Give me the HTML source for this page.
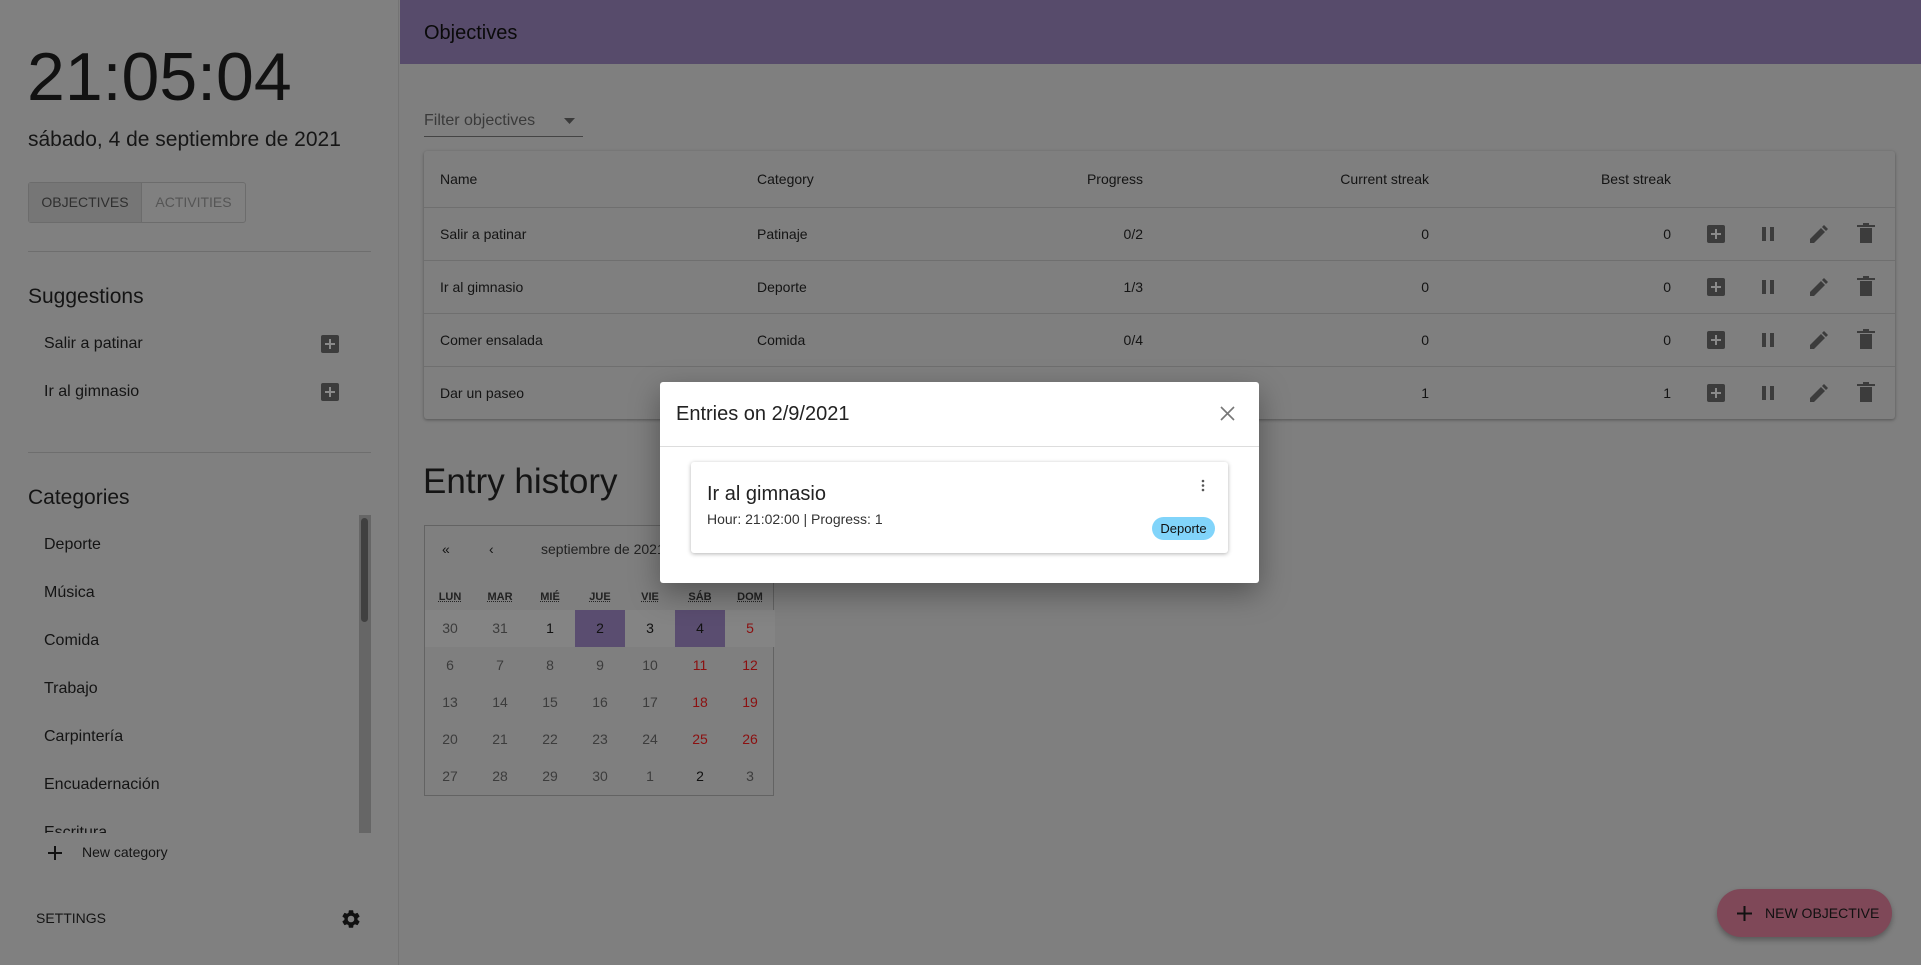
<!DOCTYPE html>
<html><head><meta charset="utf-8"><style>
*{margin:0;padding:0;box-sizing:border-box}
body{width:1921px;height:965px;background:#7f7f7f;font-family:"Liberation Sans",sans-serif;color:#141414;position:relative;overflow:hidden}
.a{position:absolute;white-space:nowrap}
.side{position:absolute;left:0;top:0;width:399px;height:965px;background:#808080;border-right:1px solid #747474}
.hdr{position:absolute;left:400px;top:0;width:1521px;height:64px;background:#574b6b}
.tbl{position:absolute;left:424px;top:151px;width:1471px;height:268px;background:#7f7f7f;box-shadow:0 1px 3px rgba(0,0,0,.35);border-radius:3px}
.row{position:absolute;left:0;width:1471px;height:53px;border-top:1px solid #6f6f6f;font-size:14px}
.row .a{top:18px}
.cal{position:absolute;left:424px;top:525px;width:350px;height:271px;border:1px solid #636363}
.cell{position:absolute;width:50px;height:37px;text-align:center;line-height:37px;font-size:14px;color:#3c3c3c}
.dlg{position:absolute;left:660px;top:382px;width:599px;height:201px;background:#fff;border-radius:3px;box-shadow:0 10px 30px rgba(0,0,0,.35)}
</style></head><body>
<div class="side">
  <div class="a" style="left:27px;top:38px;font-size:68px;color:#111">21:05:04</div>
  <div class="a" style="left:28px;top:128px;font-size:21px;color:#161616">sábado, 4 de septiembre de 2021</div>
  <div class="a" style="left:28px;top:182px;width:218px;height:41px;border:1px solid #6c6c6c;border-radius:3px"></div>
  <div class="a" style="left:29px;top:183px;width:113px;height:39px;background:#767676;border-right:1px solid #6c6c6c;font-size:14px;color:#2f2f2f;text-align:center;line-height:39px">OBJECTIVES</div>
  <div class="a" style="left:142px;top:183px;width:103px;height:39px;font-size:14px;color:#555;text-align:center;line-height:39px">ACTIVITIES</div>
  <div class="a" style="left:28px;top:251px;width:343px;height:1px;background:#6e6e6e"></div>
  <div class="a" style="left:28px;top:285px;font-size:21px">Suggestions</div>
  <div class="a" style="left:44px;top:335px;font-size:16px">Salir a patinar</div>
  <div class="a" style="left:44px;top:383px;font-size:16px">Ir al gimnasio</div>
  <svg class="a" style="left:321px;top:335px" width="19" height="19"><rect width="18" height="18" rx="2" fill="#3c3c3c"/><path d="M9 4v10M4 9h10" stroke="#8a8a8a" stroke-width="2"/></svg>
  <svg class="a" style="left:321px;top:383px" width="19" height="19"><rect width="18" height="18" rx="2" fill="#3c3c3c"/><path d="M9 4v10M4 9h10" stroke="#8a8a8a" stroke-width="2"/></svg>
  <div class="a" style="left:28px;top:452px;width:343px;height:1px;background:#6e6e6e"></div>
  <div class="a" style="left:28px;top:486px;font-size:21px">Categories</div>
  <div class="a" style="left:0;top:515px;width:372px;height:318px;overflow:hidden">
    <div class="a" style="left:44px;top:21px;font-size:16px">Deporte</div>
    <div class="a" style="left:44px;top:69px;font-size:16px">Música</div>
    <div class="a" style="left:44px;top:117px;font-size:16px">Comida</div>
    <div class="a" style="left:44px;top:165px;font-size:16px">Trabajo</div>
    <div class="a" style="left:44px;top:213px;font-size:16px">Carpintería</div>
    <div class="a" style="left:44px;top:261px;font-size:16px">Encuadernación</div>
    <div class="a" style="left:44px;top:309px;font-size:16px">Escritura</div>
    <div class="a" style="left:359px;top:0;width:12px;height:318px;background:#666"></div>
    <div class="a" style="left:361px;top:3px;width:7px;height:104px;border-radius:4px;background:#404040"></div>
  </div>
  <svg class="a" style="left:47px;top:845px" width="16" height="16"><path d="M8 1v14M1 8h14" stroke="#111" stroke-width="2"/></svg>
  <div class="a" style="left:82px;top:844px;font-size:14px">New category</div>
  <div class="a" style="left:36px;top:910px;font-size:14px">SETTINGS</div>
  <svg class="a" style="left:340px;top:908px" width="22" height="22" viewBox="0 0 24 24"><path fill="#111" d="M19.14 12.94c.04-.3.06-.61.06-.94 0-.32-.02-.64-.07-.94l2.030-1.58a.49.49 0 0 0 .12-.61l-1.92-3.32a.49.49 0 0 0-.59-.22l-2.39.96c-.5-.38-1.03-.7-1.62-.94l-.36-2.54a.48.48 0 0 0-.48-.41h-3.84c-.24 0-.43.17-.47.41l-.36 2.54c-.59.24-1.130.57-1.62.94l-2.39-.96a.48.48 0 0 0-.59.22L2.74 8.87c-.12.21-.08.47.12.61l2.03 1.58c-.05.3-.09.63-.09.94s.02.64.07.94l-2.03 1.58a.49.49 0 0 0-.12.61l1.92 3.32c.12.22.37.29.59.22l2.39-.96c.5.38 1.03.7 1.62.94l.36 2.54c.05.24.24.41.48.41h3.84c.24 0 .44-.17.47-.41l.36-2.54c.59-.24 1.13-.56 1.62-.94l2.39.96c.22.08.47 0 .59-.22l1.92-3.32c.12-.22.07-.47-.12-.61l-2.01-1.58zM12 15.6A3.6 3.6 0 1 1 12 8.4a3.6 3.6 0 0 1 0 7.2z"/></svg>
</div>

<div class="hdr"><div class="a" style="left:24px;top:22px;font-size:20px;color:#0a0a0a">Objectives</div></div>

<div class="a" style="left:424px;top:112px;font-size:16px;color:#3a3a3a">Filter objectives</div>
<svg class="a" style="left:564px;top:118px" width="12" height="7"><path d="M0 0h11L5.5 6z" fill="#3a3a3a"/></svg>
<div class="a" style="left:424px;top:136px;width:159px;height:1px;background:#444"></div>

<div class="tbl">
  <div class="a" style="left:16px;top:20px;font-size:14px">Name</div>
  <div class="a" style="left:333px;top:20px;font-size:14px">Category</div>
  <div class="a" style="right:752px;top:20px;font-size:14px">Progress</div>
  <div class="a" style="right:466px;top:20px;font-size:14px">Current streak</div>
  <div class="a" style="right:224px;top:20px;font-size:14px">Best streak</div>
  <div class="row" style="top:56px"><div class="a" style="left:16px">Salir a patinar</div><div class="a" style="left:333px">Patinaje</div><div class="a" style="right:752px">0/2</div><div class="a" style="right:466px">0</div><div class="a" style="right:224px">0</div></div>
  <div class="row" style="top:109px"><div class="a" style="left:16px">Ir al gimnasio</div><div class="a" style="left:333px">Deporte</div><div class="a" style="right:752px">1/3</div><div class="a" style="right:466px">0</div><div class="a" style="right:224px">0</div></div>
  <div class="row" style="top:162px"><div class="a" style="left:16px">Comer ensalada</div><div class="a" style="left:333px">Comida</div><div class="a" style="right:752px">0/4</div><div class="a" style="right:466px">0</div><div class="a" style="right:224px">0</div></div>
  <div class="row" style="top:215px"><div class="a" style="left:16px">Dar un paseo</div><div class="a" style="right:466px">1</div><div class="a" style="right:224px">1</div></div>
</div>
<svg class="a" style="left:1700px;top:209px" width="190" height="212">
  <defs><g id="ics">
    <rect x="7" y="16" width="18" height="18" rx="2" fill="#3c3c3c"/><path d="M16 20v10M11 25h10" stroke="#8a8a8a" stroke-width="2"/>
    <rect x="62" y="18" width="4" height="14" fill="#3c3c3c"/><rect x="70" y="18" width="4" height="14" fill="#3c3c3c"/>
    <path d="M110 34v-4l11-11 4 4-11 11z M122 18l2-2 4 4-2 2z" fill="#3c3c3c"/>
    <path d="M160 19h12v15h-12z M157 16h18v2h-18z M163 14h6v2h-6z" fill="#3c3c3c"/>
  </g></defs>
  <use href="#ics" y="0"/><use href="#ics" y="53"/><use href="#ics" y="106"/><use href="#ics" y="159"/>
</svg>

<div class="a" style="left:423px;top:462px;font-size:35px;color:#141414">Entry history</div>
<div class="cal">
  <div class="a" style="left:17px;top:15px;font-size:14px">«</div>
  <div class="a" style="left:64px;top:15px;font-size:14px">‹</div>
  <div class="a" style="left:116px;top:15px;font-size:14px;color:#222">septiembre de 2021</div>
  <div class="a" style="left:0;top:65px;width:350px;font-size:11px;font-weight:bold;color:#222">
    <span class="a" style="left:0;width:50px;text-align:center;text-decoration:underline dotted">LUN</span>
    <span class="a" style="left:50px;width:50px;text-align:center;text-decoration:underline dotted">MAR</span>
    <span class="a" style="left:100px;width:50px;text-align:center;text-decoration:underline dotted">MIÉ</span>
    <span class="a" style="left:150px;width:50px;text-align:center;text-decoration:underline dotted">JUE</span>
    <span class="a" style="left:200px;width:50px;text-align:center;text-decoration:underline dotted">VIE</span>
    <span class="a" style="left:250px;width:50px;text-align:center;text-decoration:underline dotted">SÁB</span>
    <span class="a" style="left:300px;width:50px;text-align:center;text-decoration:underline dotted">DOM</span>
  </div>
  <div class="a" style="left:0;top:84px;width:350px;height:37px;background:#848484"></div>
  <div class="cell" style="left:0;top:84px">30</div><div class="cell" style="left:50px;top:84px">31</div><div class="cell" style="left:100px;top:84px;color:#111">1</div><div class="cell" style="left:150px;top:84px;background:#5a4d70;color:#111">2</div><div class="cell" style="left:200px;top:84px;color:#111">3</div><div class="cell" style="left:250px;top:84px;background:#5a4d70;color:#111">4</div><div class="cell" style="left:300px;top:84px;color:#8b1010">5</div>
  <div class="cell" style="left:0;top:121px">6</div><div class="cell" style="left:50px;top:121px">7</div><div class="cell" style="left:100px;top:121px">8</div><div class="cell" style="left:150px;top:121px">9</div><div class="cell" style="left:200px;top:121px">10</div><div class="cell" style="left:250px;top:121px;color:#8b1010">11</div><div class="cell" style="left:300px;top:121px;color:#8b1010">12</div>
  <div class="cell" style="left:0;top:158px">13</div><div class="cell" style="left:50px;top:158px">14</div><div class="cell" style="left:100px;top:158px">15</div><div class="cell" style="left:150px;top:158px">16</div><div class="cell" style="left:200px;top:158px">17</div><div class="cell" style="left:250px;top:158px;color:#8b1010">18</div><div class="cell" style="left:300px;top:158px;color:#8b1010">19</div>
  <div class="cell" style="left:0;top:195px">20</div><div class="cell" style="left:50px;top:195px">21</div><div class="cell" style="left:100px;top:195px">22</div><div class="cell" style="left:150px;top:195px">23</div><div class="cell" style="left:200px;top:195px">24</div><div class="cell" style="left:250px;top:195px;color:#8b1010">25</div><div class="cell" style="left:300px;top:195px;color:#8b1010">26</div>
  <div class="cell" style="left:0;top:232px">27</div><div class="cell" style="left:50px;top:232px">28</div><div class="cell" style="left:100px;top:232px">29</div><div class="cell" style="left:150px;top:232px">30</div><div class="cell" style="left:200px;top:232px">1</div><div class="cell" style="left:250px;top:232px;color:#111">2</div><div class="cell" style="left:300px;top:232px">3</div>
</div>

<div class="dlg">
  <div class="a" style="left:16px;top:21px;font-size:20px;color:#222">Entries on 2/9/2021</div>
  <svg class="a" style="left:560px;top:24px" width="15" height="15"><path d="M1 1l13 13M14 1L1 14" stroke="#777" stroke-width="1.6"/></svg>
  <div class="a" style="left:0;top:64px;width:599px;height:1px;background:#ddd"></div>
  <div class="a" style="left:31px;top:80px;width:537px;height:91px;background:#fff;border-radius:3px;box-shadow:0 1px 4px rgba(0,0,0,.3)">
    <div class="a" style="left:16px;top:21px;font-size:20px;color:#222">Ir al gimnasio</div>
    <div class="a" style="left:16px;top:49px;font-size:14px;color:#333">Hour: 21:02:00 | Progress: 1</div>
    <svg class="a" style="left:510px;top:17px" width="4" height="13"><circle cx="2" cy="2" r="1.3" fill="#555"/><circle cx="2" cy="6.5" r="1.3" fill="#555"/><circle cx="2" cy="11" r="1.3" fill="#555"/></svg>
    <div class="a" style="left:461px;top:55px;width:63px;height:23px;border-radius:12px;background:#81d4fa;font-size:13px;line-height:23px;text-align:center;color:#111">Deporte</div>
  </div>
</div>

<div class="a" style="left:1717px;top:889px;width:175px;height:48px;border-radius:24px;background:#7f4858;box-shadow:0 3px 6px rgba(0,0,0,.3)">
  <svg class="a" style="left:20px;top:17px" width="15" height="15"><path d="M7.5 0v15M0 7.5h15" stroke="#111" stroke-width="2"/></svg>
  <div class="a" style="left:48px;top:16px;font-size:14px;color:#111">NEW OBJECTIVE</div>
</div>
</body></html>
